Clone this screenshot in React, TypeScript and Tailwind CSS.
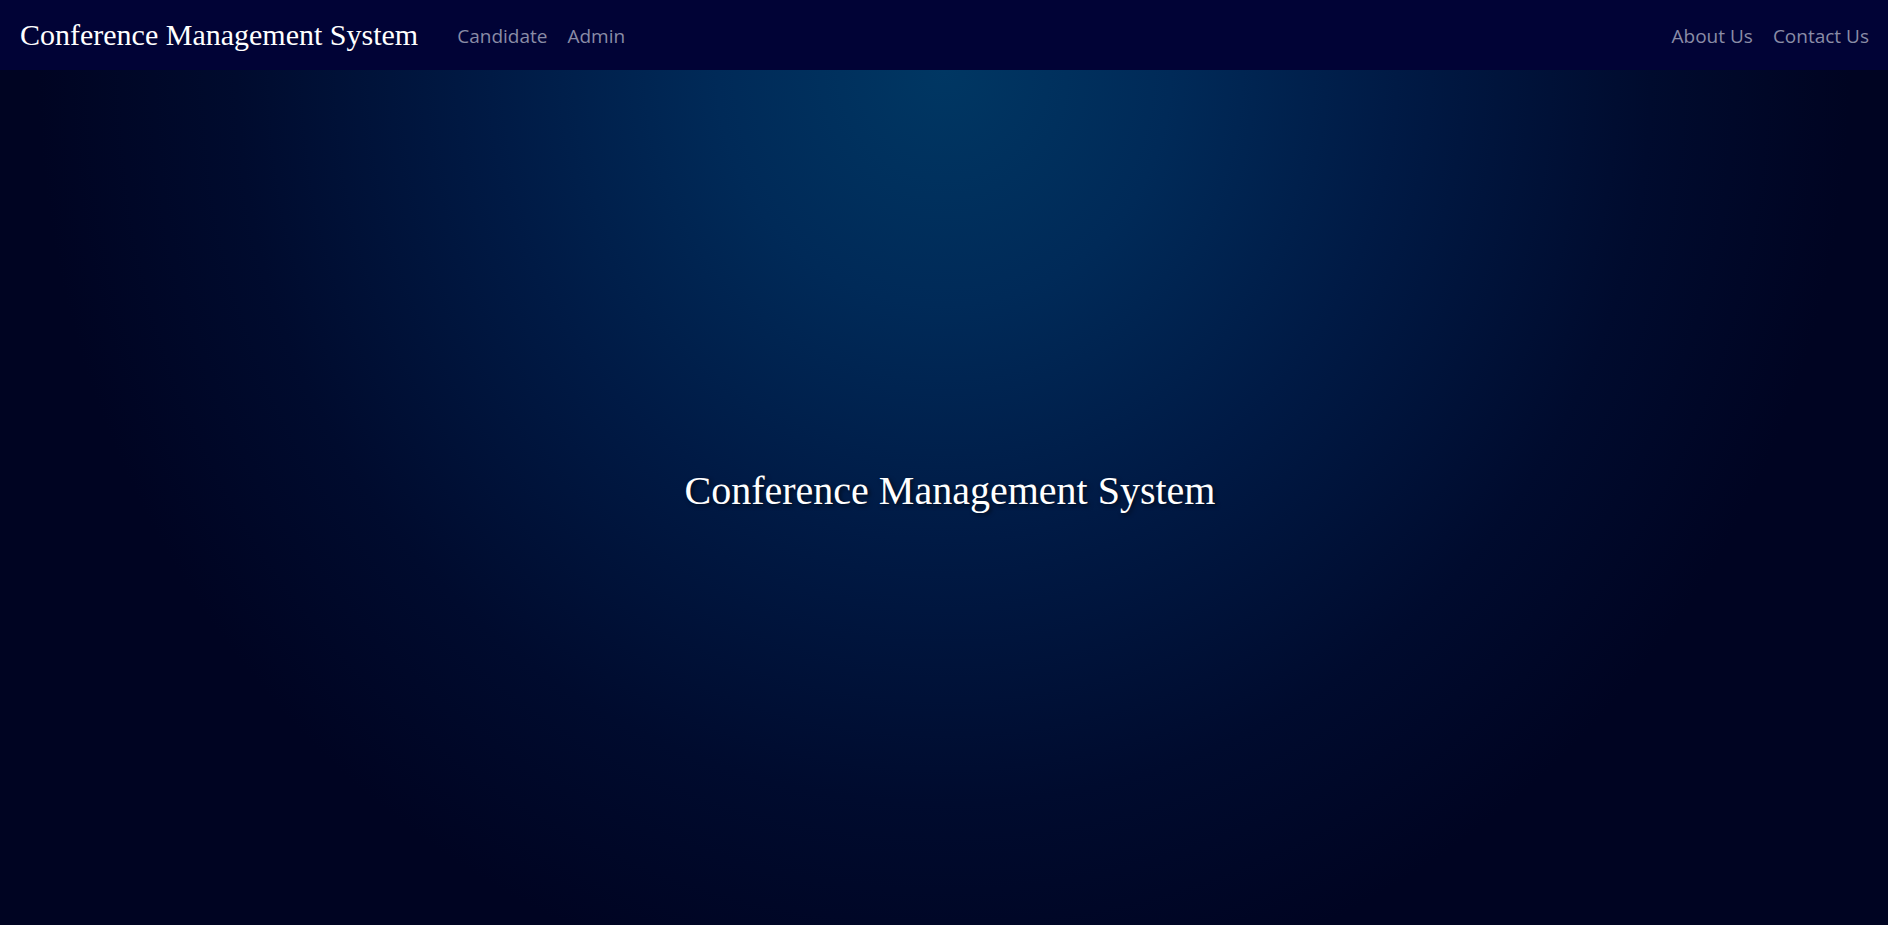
import React from "react";

export default function App() {
  return (
    <div className="flex h-[925px] w-full flex-col bg-[#000322]">
      <nav className="flex h-[70px] shrink-0 items-center bg-[#010336] pl-[20px] pr-[9px]">
        <span className="mr-[29px] font-['Liberation_Serif','Times_New_Roman',serif] text-[30px] leading-none text-white">
          Conference Management System
        </span>
        <div className="mt-[2px] flex items-center font-['Open_Sans','Noto_Sans',sans-serif] text-[19px] text-[#8a8ca6]">
          <a className="px-[10px]">Candidate</a>
          <a className="px-[10px]">Admin</a>
        </div>
        <div className="ml-auto mt-[2px] flex items-center font-['Open_Sans','Noto_Sans',sans-serif] text-[19px] text-[#8a8ca6]">
          <a className="px-[10px]">About Us</a>
          <a className="px-[10px]">Contact Us</a>
        </div>
      </nav>
      <main className="flex flex-1 items-center justify-center bg-[radial-gradient(ellipse_48%_110%_at_50%_0%,#003763_0%,#002a58_25%,#001a45_50%,#000b2e_78%,#000422_100%)]">
        <h1 className="-mt-[14px] ml-[12px] font-['Liberation_Serif','Times_New_Roman',serif] text-[40px] leading-none text-white [text-shadow:2px_2px_4px_rgba(0,0,0,0.6)]">
          Conference Management System
        </h1>
      </main>
    </div>
  );
}
